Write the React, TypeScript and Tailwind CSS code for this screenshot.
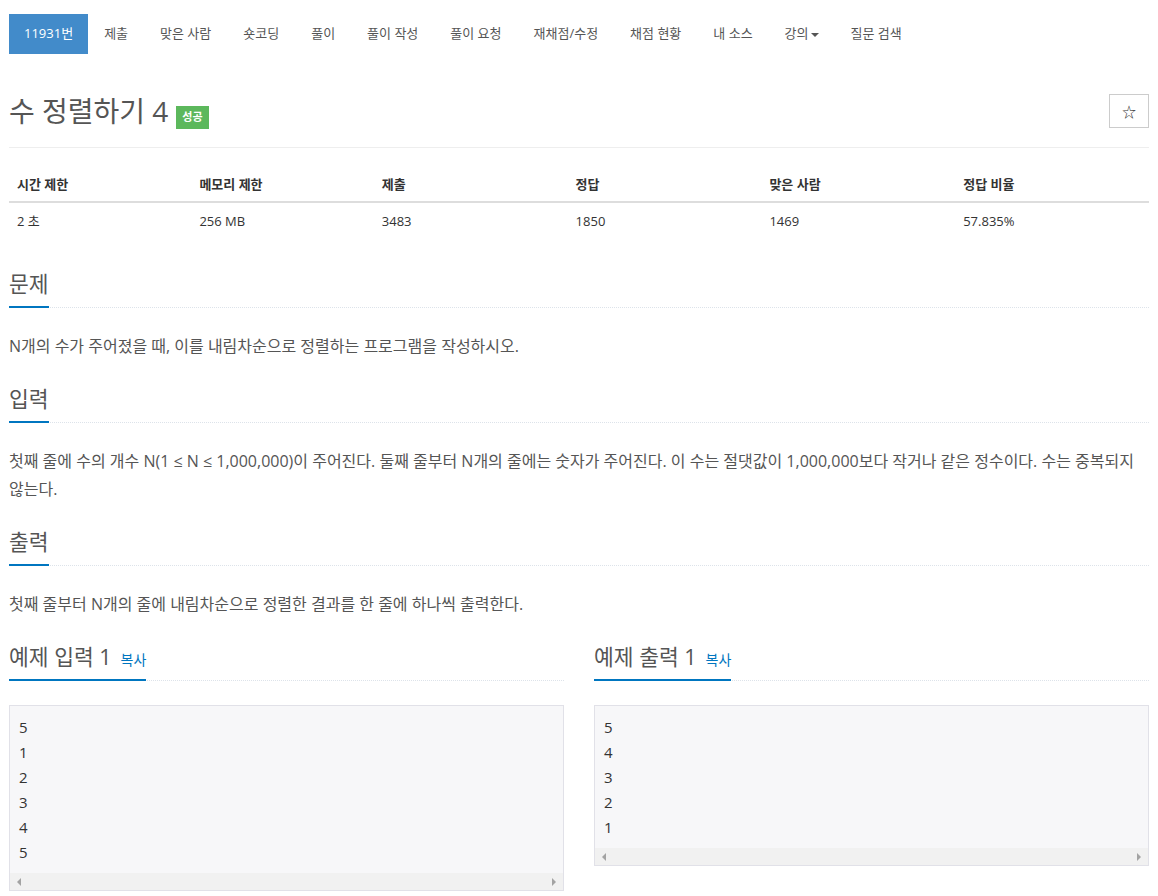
const FONT = "font-['Open_Sans','Noto_Sans_CJK_KR',sans-serif]";

const tabs = [
  "제출",
  "맞은 사람",
  "숏코딩",
  "풀이",
  "풀이 작성",
  "풀이 요청",
  "재채점/수정",
  "채점 현황",
  "내 소스",
];

const stats = [
  { label: "시간 제한", value: "2 초", width: "w-[16%]" },
  { label: "메모리 제한", value: "256 MB", width: "w-[16%]" },
  { label: "제출", value: "3483", width: "w-[17%]" },
  { label: "정답", value: "1850", width: "w-[17%]" },
  { label: "맞은 사람", value: "1469", width: "w-[17%]" },
  { label: "정답 비율", value: "57.835%", width: "w-[17%]" },
];

function Headline({ title, copy }: { title: string; copy?: boolean }) {
  return (
    <div className="border-b border-dotted border-[#dde3ea] mb-[24px]">
      <h2 className="inline-block -mb-px border-b-2 border-[#0076c0] pb-[8px] text-[21.5px] leading-[28px] text-[#555] font-normal">
        {title}
        {copy && (
          <span className="ml-[9px] text-[14px] leading-none text-[#0076c0]">복사</span>
        )}
      </h2>
    </div>
  );
}

function Sample({ title, lines }: { title: string; lines: string[] }) {
  return (
    <div>
      <Headline title={title} copy />
      <div className="border border-[#e1e1e8] bg-[#f7f7f9]">
        <div className="pt-[9px] pb-[8px] px-[9px] text-[15px] leading-[25px] text-[#333]">
          {lines.map((line, i) => (
            <div key={i}>{line}</div>
          ))}
        </div>
        <div className="flex h-[17px] items-center justify-between bg-[#f1f1f1] px-[7px]">
          <span className="h-0 w-0 border-y-[4px] border-r-[4px] border-y-transparent border-r-[#a3a3a3]" />
          <span className="h-0 w-0 border-y-[4px] border-l-[4px] border-y-transparent border-l-[#a3a3a3]" />
        </div>
      </div>
    </div>
  );
}

export default function App() {
  return (
    <div className={`${FONT} min-h-screen bg-white text-[#555]`}>
      <div className="px-[9px] pt-[14px]">
        <nav className="flex text-[13px]">
          <div className="flex h-10 items-center bg-[#428bca] px-[15px] text-white">
            11931번
          </div>
          {tabs.map((tab) => (
            <div key={tab} className="flex h-10 items-center px-[16px] text-[#555]">
              {tab}
            </div>
          ))}
          <div className="flex h-10 items-center px-[16px] text-[#555]">
            강의
            <span className="ml-[2px] mt-[2px] h-0 w-0 border-x-[4px] border-t-[4px] border-x-transparent border-t-[#555]" />
          </div>
          <div className="flex h-10 items-center px-[16px] text-[#555]">
            질문 검색
          </div>
        </nav>

        <div className="mt-[40px] flex h-[54px] items-start justify-between border-b border-[#eee]">
          <div className="flex h-[34px] items-center">
            <h1 className="text-[28px] leading-[34px] font-normal text-[#555]">
              수 정렬하기 4
            </h1>
            <span className="ml-[8px] mt-[13px] flex h-[23px] items-center px-[6px] bg-[#5cb85c] text-[11px] font-bold text-white">
              성공
            </span>
          </div>
          <button className="flex h-[34px] w-10 items-center justify-center border border-[#ccc] bg-white text-[14px] text-[#333]">
            ☆
          </button>
        </div>

        <table className="mt-[19px] mb-[32px] w-full border-collapse text-[13px] text-[#333]">
          <thead>
            <tr>
              {stats.map((s) => (
                <th
                  key={s.label}
                  className={`${s.width} border-b-2 border-[#ddd] px-2 py-2 text-left font-bold leading-[18px]`}
                >
                  {s.label}
                </th>
              ))}
            </tr>
          </thead>
          <tbody>
            <tr>
              {stats.map((s) => (
                <td key={s.label} className="px-2 pt-[9px] pb-2 leading-[18px]">
                  {s.value}
                </td>
              ))}
            </tr>
          </tbody>
        </table>

        <section className="mb-[25px]">
          <Headline title="문제" />
          <p className="text-[16px] leading-[28px]">
            N개의 수가 주어졌을 때, 이를 내림차순으로 정렬하는 프로그램을 작성하시오.
          </p>
        </section>

        <section className="mb-[25px]">
          <Headline title="입력" />
          <p className="text-[16px] leading-[28px]">
            첫째 줄에 수의 개수 N(1 ≤ N ≤ 1,000,000)이 주어진다. 둘째 줄부터 N개의 줄에는 숫자가 주어진다. 이 수는 절댓값이 1,000,000보다 작거나 같은 정수이다. 수는 중복되지 않는다.
          </p>
        </section>

        <section className="mb-[25px]">
          <Headline title="출력" />
          <p className="text-[16px] leading-[28px]">
            첫째 줄부터 N개의 줄에 내림차순으로 정렬한 결과를 한 줄에 하나씩 출력한다.
          </p>
        </section>

        <div className="grid grid-cols-2 gap-[30px]">
          <Sample title="예제 입력 1" lines={["5", "1", "2", "3", "4", "5"]} />
          <Sample title="예제 출력 1" lines={["5", "4", "3", "2", "1"]} />
        </div>
      </div>
    </div>
  );
}
